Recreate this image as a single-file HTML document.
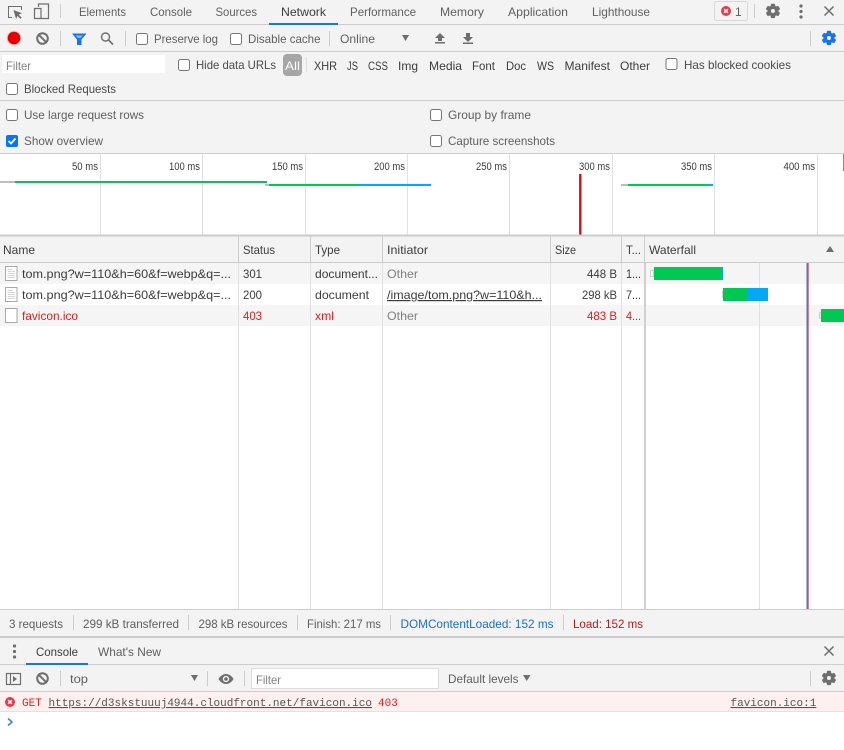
<!DOCTYPE html>
<html><head><meta charset="utf-8"><title>DevTools</title>
<style>
html,body{margin:0;padding:0;background:#fff;width:844px;height:750px;overflow:hidden}
svg{display:block}
text{font-family:"Liberation Sans",Arial,sans-serif;font-size:12px;fill:#3c3c3c}
.t{fill:#5f5f5f}
.g{fill:#5f5f5f}
.m{font-family:"Liberation Mono",monospace;font-size:11px}
.r{fill:#e41a1a}
.o{fill:#808080}
.sep{stroke:#ccc;stroke-width:1}
</style></head><body>
<svg width="844" height="750" viewBox="0 0 844 750" xmlns="http://www.w3.org/2000/svg">
<defs>
<path id="gear" stroke-width="1.100" d="M19.43 12.98c.04-.32.07-.64.07-.98s-.03-.66-.07-.98l2.11-1.65c.19-.15.24-.42.12-.64l-2-3.46c-.12-.22-.39-.3-.61-.22l-2.49 1c-.52-.4-1.08-.73-1.69-.98l-.38-2.65C14.46 2.18 14.25 2 14 2h-4c-.25 0-.46.18-.49.42l-.38 2.65c-.61.25-1.17.59-1.69.98l-2.49-1c-.23-.09-.49 0-.61.22l-2 3.46c-.13.22-.07.49.12.64l2.11 1.65c-.04.32-.07.65-.07.98s.03.66.07.98l-2.11 1.65c-.19.15-.24.42-.12.64l2 3.46c.12.22.39.3.61.22l2.49-1c.52.4 1.08.73 1.69.98l.38 2.65c.03.24.24.42.49.42h4c.25 0 .46-.18.49-.42l.38-2.65c.61-.25 1.17-.59 1.69-.98l2.49 1c.23.09.49 0 .61-.22l2-3.46c.12-.22.07-.49-.12-.64l-2.11-1.65zM12 15.500c-1.930 0-3.500-1.570-3.500-3.500s1.570-3.500 3.500-3.500 3.500 1.570 3.500 3.500-1.570 3.500-3.500 3.500z"/>
<g id="cb"><rect x="0.500" y="0.500" width="11" height="11" rx="2" fill="#fff" stroke="#767676"/></g>
<g id="clear"><circle cx="0" cy="0" r="5.300" fill="none" stroke="#6e6e6e" stroke-width="2"/><path d="M-3.700-3.700L3.700 3.700" stroke="#6e6e6e" stroke-width="2"/></g>
<g id="x"><path d="M-4.500-4.500L4.500 4.500M4.500-4.500L-4.500 4.500" stroke="#6e6e6e" stroke-width="1.500" fill="none"/></g>
<g id="err"><circle r="5" fill="#e8384a"/><path d="M-1.900-1.900L1.900 1.900M1.900-1.900L-1.900 1.900" stroke="#fff" stroke-width="1.400"/></g>
<g id="doc"><path d="M5.500 266.500h11.500v14h-11.500z" fill="#fff" stroke="#a8a8a8"/><path d="M7.500 269.500h5M7.500 271.500h7.500M7.500 273.500h7.500M7.500 275.500h7.500M7.500 277.500h7.500" stroke="#d8d8d8" stroke-width="1"/></g>
</defs>

<!-- backgrounds -->
<rect width="844" height="750" fill="#fff"/>
<rect width="844" height="154" fill="#f3f3f3"/>
<rect y="24" width="844" height="1" fill="#ccc"/>
<rect y="51" width="844" height="1" fill="#ccc"/>
<rect y="100" width="844" height="1" fill="#ccc"/>
<rect y="153" width="844" height="1" fill="#ccc"/>

<!-- main tabs -->
<path d="M12 17.500H8.500V6.500H21.500V10" fill="none" stroke="#6e6e6e" stroke-width="1"/>
<path d="M13.500 10l8.500 3.300-3.300 1.300 3 3-1.300 1.300-3-3-1.300 3.300z" fill="#6e6e6e"/>
<path d="M38.500 7V4h10v14.500h-7M34.500 8.500h6.500v10h-6.500z" fill="none" stroke="#6e6e6e" stroke-width="1.200"/>
<path d="M60.500 4v14" class="sep"/>
<text class="t" x="79" y="16" textLength="47" lengthAdjust="spacingAndGlyphs">Elements</text>
<text class="t" x="150" y="16" textLength="42" lengthAdjust="spacingAndGlyphs">Console</text>
<text class="t" x="215.500" y="16" textLength="41.500" lengthAdjust="spacingAndGlyphs">Sources</text>
<text x="281" y="16" textLength="45" lengthAdjust="spacingAndGlyphs">Network</text>
<rect x="269" y="23" width="69" height="2" fill="#1a73e8"/>
<text class="t" x="350" y="16" textLength="66" lengthAdjust="spacingAndGlyphs">Performance</text>
<text class="t" x="440" y="16" textLength="44" lengthAdjust="spacingAndGlyphs">Memory</text>
<text class="t" x="508" y="16" textLength="60" lengthAdjust="spacingAndGlyphs">Application</text>
<text class="t" x="592" y="16" textLength="58" lengthAdjust="spacingAndGlyphs">Lighthouse</text>
<rect x="714.500" y="1.500" width="33" height="19" rx="2" fill="#f3f3f3" stroke="#d8d8d8"/>
<use href="#err" transform="translate(726,11)"/>
<text x="735" y="16" class="t">1</text>
<path d="M754.500 4v14" class="sep"/>
<use href="#gear" fill="#6e6e6e" stroke="#6e6e6e" transform="translate(764.800,2.800) scale(.68)"/>
<circle cx="801" cy="6" r="1.600" fill="#6e6e6e"/><circle cx="801" cy="11.500" r="1.600" fill="#6e6e6e"/><circle cx="801" cy="17" r="1.600" fill="#6e6e6e"/>
<use href="#x" transform="translate(829,11)"/>

<!-- toolbar -->
<circle cx="14" cy="38" r="7.200" fill="#f2a0a0" opacity=".6"/>
<circle cx="14" cy="38" r="6.300" fill="#e60000"/>
<use href="#clear" transform="translate(42.500,38.500)"/>
<path d="M60.500 31v15" class="sep"/>
<path d="M72 33.500h14.500l-5 6v5.500h-4.500v-5.500z" fill="#1a73e8"/><path d="M75.500 35.500h7.500l-2.500 2.500h-2.500z" fill="#8fbcf5"/>
<circle cx="105.500" cy="37" r="4" fill="none" stroke="#6e6e6e" stroke-width="1.400"/><path d="M108.500 40l4.500 4.500" stroke="#6e6e6e" stroke-width="1.600"/>
<path d="M125.500 31v15" class="sep"/>
<use href="#cb" x="136" y="33"/>
<text class="g" x="154" y="43" textLength="64" lengthAdjust="spacingAndGlyphs">Preserve log</text>
<use href="#cb" x="230" y="33"/>
<text class="g" x="248" y="43" textLength="72.500" lengthAdjust="spacingAndGlyphs">Disable cache</text>
<path d="M329.500 31v15" class="sep"/>
<text class="g" x="340" y="43" textLength="35" lengthAdjust="spacingAndGlyphs">Online</text>
<path d="M402 35h7l-3.500 6z" fill="#6e6e6e"/>
<path d="M440 33l5 5h-3v3h-4v-3h-3zM435 42h10v1.500h-10z" fill="#6e6e6e"/>
<path d="M466 33h4v4h3l-5 5-5-5h3zM463 42.500h10v1.500h-10z" fill="#6e6e6e"/>
<path d="M810.500 31v15" class="sep"/>
<use href="#gear" fill="#1a73e8" stroke="#1a73e8" transform="translate(820.800,29.800) scale(.68)"/>

<!-- filter row -->
<rect x="2" y="55" width="163" height="18" fill="#fff"/>
<text class="o" x="6" y="70" textLength="25" lengthAdjust="spacingAndGlyphs">Filter</text>
<use href="#cb" x="178" y="59"/>
<text x="196" y="69" textLength="80" lengthAdjust="spacingAndGlyphs" style="fill:#4a4a4a">Hide data URLs</text>
<rect x="283" y="54" width="19" height="22" rx="4" fill="#a6a6a6"/>
<text x="285" y="70" textLength="15" lengthAdjust="spacingAndGlyphs" style="fill:#fff">All</text>
<path d="M306.500 57v15" stroke="#ddd"/>
<text x="314" y="70" textLength="23" lengthAdjust="spacingAndGlyphs">XHR</text>
<text x="347" y="70" textLength="11" lengthAdjust="spacingAndGlyphs">JS</text>
<text x="368" y="70" textLength="20" lengthAdjust="spacingAndGlyphs">CSS</text>
<text x="398" y="70" textLength="20" lengthAdjust="spacingAndGlyphs">Img</text>
<text x="429" y="70" textLength="33" lengthAdjust="spacingAndGlyphs">Media</text>
<text x="472" y="70" textLength="23" lengthAdjust="spacingAndGlyphs">Font</text>
<text x="506" y="70" textLength="20" lengthAdjust="spacingAndGlyphs">Doc</text>
<text x="537" y="70" textLength="17" lengthAdjust="spacingAndGlyphs">WS</text>
<text x="564.500" y="70" textLength="45.500" lengthAdjust="spacingAndGlyphs">Manifest</text>
<text x="620" y="70" textLength="30" lengthAdjust="spacingAndGlyphs">Other</text>
<use href="#cb" x="665.500" y="58"/>
<text x="684" y="69" textLength="107" lengthAdjust="spacingAndGlyphs" style="fill:#4a4a4a">Has blocked cookies</text>
<use href="#cb" x="6" y="83"/>
<text x="24" y="93" textLength="92" lengthAdjust="spacingAndGlyphs" style="fill:#4a4a4a">Blocked Requests</text>

<!-- settings -->
<use href="#cb" x="6" y="109"/>
<text class="g" x="24" y="119" textLength="120" lengthAdjust="spacingAndGlyphs">Use large request rows</text>
<rect x="6" y="135" width="12" height="12" rx="2" fill="#0a75f0"/>
<path d="M8.500 141l2.500 2.500 4.500-5" fill="none" stroke="#fff" stroke-width="1.800"/>
<text class="g" x="24" y="145" textLength="79" lengthAdjust="spacingAndGlyphs">Show overview</text>
<use href="#cb" x="430" y="109"/>
<text class="g" x="448" y="119" textLength="83" lengthAdjust="spacingAndGlyphs">Group by frame</text>
<use href="#cb" x="430" y="135"/>
<text class="g" x="448" y="145" textLength="107" lengthAdjust="spacingAndGlyphs">Capture screenshots</text>

<!-- overview -->
<g stroke="#e0e0e0" stroke-width="1">
<path d="M100.500 154v81M202.500 154v81M305.500 154v81M407.500 154v81M509.500 154v81M612.500 154v81M714.500 154v81M817.500 154v81"/>
</g>
<rect x="843" y="154" width="1" height="17" fill="#888"/>
<text x="72" y="170" textLength="26" lengthAdjust="spacingAndGlyphs" style="font-size:11px">50 ms</text>
<text x="169" y="170" textLength="31" lengthAdjust="spacingAndGlyphs" style="font-size:11px">100 ms</text>
<text x="272" y="170" textLength="31" lengthAdjust="spacingAndGlyphs" style="font-size:11px">150 ms</text>
<text x="374" y="170" textLength="31" lengthAdjust="spacingAndGlyphs" style="font-size:11px">200 ms</text>
<text x="476" y="170" textLength="31" lengthAdjust="spacingAndGlyphs" style="font-size:11px">250 ms</text>
<text x="579" y="170" textLength="31" lengthAdjust="spacingAndGlyphs" style="font-size:11px">300 ms</text>
<text x="681" y="170" textLength="31" lengthAdjust="spacingAndGlyphs" style="font-size:11px">350 ms</text>
<text x="783.500" y="170" textLength="31.500" lengthAdjust="spacingAndGlyphs" style="font-size:11px">400 ms</text>
<rect x="0" y="181" width="15" height="2" fill="#bdbdbd"/>
<rect x="15" y="181" width="250" height="2" fill="#00c853"/>
<rect x="265" y="181" width="2" height="2" fill="#03a9f4"/>
<rect x="265" y="184" width="4" height="2" fill="#bdbdbd"/>
<rect x="269" y="184" width="90" height="2" fill="#00c853"/>
<rect x="359" y="184" width="72" height="2" fill="#03a9f4"/>
<rect x="621" y="184" width="7" height="2" fill="#bdbdbd"/>
<rect x="628" y="184" width="81" height="2" fill="#00c853"/>
<rect x="709" y="184" width="4" height="2" fill="#03a9f4"/>
<rect x="579" y="174" width="1" height="61" fill="#3b5bb5"/>
<rect x="580" y="174" width="1.500" height="61" fill="#c8141e"/>
<rect y="234.500" width="844" height="2" fill="#ccc"/>

<!-- table header -->
<rect y="236.500" width="844" height="26" fill="#f3f3f3"/>
<rect y="262" width="844" height="1" fill="#ccc"/>
<!-- rows -->
<rect y="263" width="844" height="21" fill="#f5f5f5"/>
<rect y="305" width="844" height="21" fill="#f5f5f5"/>
<!-- column lines -->
<g stroke="#ccc"><path d="M238.500 236v27M310.500 236v27M382.500 236v27M550.500 236v27M621.500 236v27M644.500 236v27"/></g>
<g stroke="#e0e0e0"><path d="M238.500 263v346M310.500 263v346M382.500 263v346M550.500 263v346M621.500 263v346"/></g>
<rect x="644" y="263" width="2" height="346" fill="#d0d0d0"/>
<rect x="759" y="263" width="1" height="346" fill="#e0e0e0"/>
<text x="3" y="254" textLength="32" lengthAdjust="spacingAndGlyphs">Name</text>
<text x="243" y="254" textLength="32" lengthAdjust="spacingAndGlyphs">Status</text>
<text x="315" y="254" textLength="25" lengthAdjust="spacingAndGlyphs">Type</text>
<text x="387" y="254" textLength="41" lengthAdjust="spacingAndGlyphs">Initiator</text>
<text x="555" y="254" textLength="21" lengthAdjust="spacingAndGlyphs">Size</text>
<text x="626" y="254" textLength="15" lengthAdjust="spacingAndGlyphs">T...</text>
<text x="649" y="254" textLength="47" lengthAdjust="spacingAndGlyphs">Waterfall</text>
<path d="M826 252l4-6 4 6z" fill="#6e6e6e"/>

<use href="#doc"/>
<use href="#doc" y="21"/>
<path d="M5.500 308.500h11.500v14h-11.500z" fill="#fff" stroke="#a8a8a8"/>

<text x="22" y="278" textLength="209" lengthAdjust="spacingAndGlyphs">tom.png?w=110&amp;h=60&amp;f=webp&amp;q=...</text>
<text x="243" y="278" textLength="19" lengthAdjust="spacingAndGlyphs">301</text>
<text x="315" y="278" textLength="63" lengthAdjust="spacingAndGlyphs">document...</text>
<text class="o" x="387" y="278" textLength="31" lengthAdjust="spacingAndGlyphs">Other</text>
<text x="587" y="278" textLength="30" lengthAdjust="spacingAndGlyphs">448 B</text>
<text x="626" y="278" textLength="15" lengthAdjust="spacingAndGlyphs">1...</text>

<text x="22" y="299" textLength="209" lengthAdjust="spacingAndGlyphs">tom.png?w=110&amp;h=60&amp;f=webp&amp;q=...</text>
<text x="243" y="299" textLength="19" lengthAdjust="spacingAndGlyphs">200</text>
<text x="315" y="299" textLength="54" lengthAdjust="spacingAndGlyphs">document</text>
<text x="387" y="299" textLength="155" lengthAdjust="spacingAndGlyphs" text-decoration="underline">/image/tom.png?w=110&amp;h...</text>
<text x="582" y="299" textLength="35" lengthAdjust="spacingAndGlyphs">298 kB</text>
<text x="626" y="299" textLength="15" lengthAdjust="spacingAndGlyphs">7...</text>

<text class="r" x="22" y="320" textLength="56" lengthAdjust="spacingAndGlyphs">favicon.ico</text>
<text class="r" x="243" y="320" textLength="19" lengthAdjust="spacingAndGlyphs">403</text>
<text class="r" x="315" y="320" textLength="19" lengthAdjust="spacingAndGlyphs">xml</text>
<text class="o" x="387" y="320" textLength="31" lengthAdjust="spacingAndGlyphs">Other</text>
<text class="r" x="587" y="320" textLength="30" lengthAdjust="spacingAndGlyphs">483 B</text>
<text class="r" x="626" y="320" textLength="15" lengthAdjust="spacingAndGlyphs">4...</text>

<!-- waterfall -->
<rect x="650.500" y="270.500" width="3" height="6" fill="#fff" stroke="#d0d0d0"/>
<rect x="654" y="267" width="68" height="13" fill="#00c853"/>
<rect x="722" y="267" width="1" height="13" fill="#03a9f4"/>
<rect x="722.500" y="291.500" width="1" height="6" fill="#fff" stroke="#d0d0d0"/>
<rect x="723" y="288" width="25" height="13" fill="#00c853"/>
<rect x="748" y="288" width="20" height="13" fill="#03a9f4"/>
<rect x="819.500" y="312.500" width="1.500" height="6" fill="#fff" stroke="#d0d0d0"/>
<rect x="821" y="309" width="23" height="13" fill="#00c853"/>
<rect x="806.500" y="263" width="1" height="346" fill="#4a6fd0"/>
<rect x="807.500" y="263" width="1.200" height="346" fill="#c8545c"/>

<!-- status bar -->
<rect y="609" width="844" height="28" fill="#f3f3f3"/>
<rect y="609" width="844" height="1" fill="#ccc"/>
<text class="g" x="9" y="628" textLength="54" lengthAdjust="spacingAndGlyphs">3 requests</text>
<path d="M73.500 615v15M188.500 615v15M297.500 615v15M390.500 615v15M563.500 615v15" stroke="#ccc"/>
<text class="g" x="83" y="628" textLength="96" lengthAdjust="spacingAndGlyphs">299 kB transferred</text>
<text class="g" x="198.500" y="628" textLength="89" lengthAdjust="spacingAndGlyphs">298 kB resources</text>
<text class="g" x="307" y="628" textLength="74" lengthAdjust="spacingAndGlyphs">Finish: 217 ms</text>
<text x="400.500" y="628" textLength="153" lengthAdjust="spacingAndGlyphs" style="fill:#1a6fd0">DOMContentLoaded: 152 ms</text>
<text x="573" y="628" textLength="70" lengthAdjust="spacingAndGlyphs" style="fill:#b71c1c">Load: 152 ms</text>

<!-- drawer -->
<rect y="636.500" width="844" height="55" fill="#f3f3f3"/>
<rect y="636" width="844" height="2" fill="#ccc"/>
<rect y="664" width="844" height="1" fill="#ccc"/>
<rect y="691" width="844" height="1" fill="#ccc"/>
<circle cx="14.500" cy="646" r="1.600" fill="#6e6e6e"/><circle cx="14.500" cy="651.500" r="1.600" fill="#6e6e6e"/><circle cx="14.500" cy="657" r="1.600" fill="#6e6e6e"/>
<text x="36" y="656" textLength="42" lengthAdjust="spacingAndGlyphs">Console</text>
<rect x="26" y="663" width="62" height="2" fill="#1a73e8"/>
<text class="t" x="98" y="656" textLength="63" lengthAdjust="spacingAndGlyphs">What's New</text>
<use href="#x" transform="translate(829,651)"/>

<rect x="6.500" y="673.500" width="14" height="11" fill="none" stroke="#6e6e6e" stroke-width="1.200"/>
<path d="M10.500 673.500v11" stroke="#6e6e6e" stroke-width="1.200"/>
<path d="M13 676l4 3-4 3z" fill="#6e6e6e"/>
<use href="#clear" transform="translate(42.500,678.500)"/>
<path d="M60.500 671v15M207.500 671v15M244.500 671v15M810.500 671v15" stroke="#ccc"/>
<text class="g" x="70" y="683" textLength="18" lengthAdjust="spacingAndGlyphs">top</text>
<path d="M191 675h7l-3.500 6z" fill="#6e6e6e"/>
<path d="M218.500 679c2-3.500 5-5 7.500-5s5.500 1.500 7.500 5c-2 3.500-5 5-7.500 5s-5.500-1.500-7.500-5z" fill="#6e6e6e"/>
<circle cx="226" cy="679" r="3.200" fill="#f3f3f3"/><circle cx="226" cy="679" r="1.800" fill="#6e6e6e"/>
<rect x="251.500" y="668.500" width="187" height="20" fill="#fff" stroke="#ddd"/>
<text class="o" x="256" y="684" textLength="25" lengthAdjust="spacingAndGlyphs">Filter</text>
<text class="g" x="448" y="683" textLength="70.500" lengthAdjust="spacingAndGlyphs">Default levels</text>
<path d="M523 675h7.500l-3.750 6z" fill="#6e6e6e"/>
<use href="#gear" fill="#6e6e6e" stroke="#6e6e6e" transform="translate(820.800,669.800) scale(.68)"/>

<!-- console -->
<rect y="692" width="844" height="19" fill="#fff0f0"/>
<rect y="711" width="844" height="1" fill="#ffd6d6"/>
<use href="#err" transform="translate(10,702)"/>
<text class="m r" x="22" y="706" style="fill:#f01a1a">GET</text>
<text class="m" x="48.500" y="706" text-decoration="underline" style="fill:#555">https://d3skstuuuj4944.cloudfront.net/favicon.ico</text>
<text class="m r" x="378" y="706" style="fill:#f01a1a">403</text>
<text class="m" x="730.500" y="706" text-decoration="underline" style="fill:#555">favicon.ico:1</text>
<path d="M8 718.500l4 3.500-4 3.500" fill="none" stroke="#3a7be8" stroke-width="1.500"/>
</svg>
</body></html>
